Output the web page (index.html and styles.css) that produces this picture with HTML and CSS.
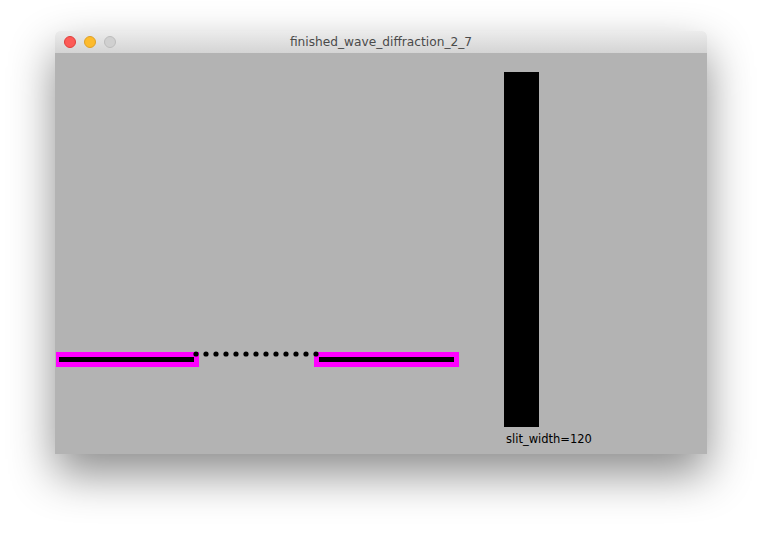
FILE: index.html
```html
<!DOCTYPE html>
<html>
<head>
<meta charset="utf-8">
<link rel="stylesheet" href="styles.css">
</head>
<body>
<div class="window">
  <div class="titlebar">
    <div class="lights">
      <span class="light red"></span>
      <span class="light yellow"></span>
      <span class="light gray"></span>
    </div>
    <div class="title">finished_wave_diffraction_2_7</div>
  </div>
  <div class="content">
    <svg class="canvas" width="652" height="401" viewBox="0 0 652 401">
      <rect x="1" y="299" width="143" height="15" fill="#ff00ff"/>
      <rect x="4" y="304" width="135" height="5" fill="#000"/>
      <rect x="259" y="299" width="145" height="15" fill="#ff00ff"/>
      <rect x="264" y="304" width="135" height="5" fill="#000"/>
      <g fill="#000">
        <circle cx="141" cy="301" r="2.6"/>
        <circle cx="151" cy="301" r="2.6"/>
        <circle cx="161" cy="301" r="2.6"/>
        <circle cx="171" cy="301" r="2.6"/>
        <circle cx="181" cy="301" r="2.6"/>
        <circle cx="191" cy="301" r="2.6"/>
        <circle cx="201" cy="301" r="2.6"/>
        <circle cx="211" cy="301" r="2.6"/>
        <circle cx="221" cy="301" r="2.6"/>
        <circle cx="231" cy="301" r="2.6"/>
        <circle cx="241" cy="301" r="2.6"/>
        <circle cx="251" cy="301" r="2.6"/>
        <circle cx="261" cy="301" r="2.6"/>
      </g>
      <rect x="449" y="19" width="35" height="355" fill="#000"/>
      <text class="label" x="451" y="390">slit_width=120</text>
    </svg>
  </div>
</div>
</body>
</html>
```

FILE: styles.css
```css
html, body {
  margin: 0;
  padding: 0;
  background: #ffffff;
}
body {
  width: 762px;
  height: 534px;
  overflow: hidden;
  padding: 31px 0 0 55px;
  box-sizing: border-box;
}
.window {
  width: 652px;
  height: 423px;
  display: flex;
  flex-direction: column;
  border-radius: 5px 5px 0 0;
  box-shadow: 0 20px 45px 0 rgba(0, 0, 0, 0.45);
  overflow: hidden;
}
.titlebar {
  height: 22px;
  flex: 0 0 22px;
  background: linear-gradient(#ececec, #d4d4d4);
  display: flex;
  align-items: center;
  position: relative;
}
.lights {
  display: flex;
  gap: 8px;
  padding-left: 9px;
  align-items: center;
}
.light {
  width: 12px;
  height: 12px;
  border-radius: 50%;
  box-sizing: border-box;
}
.red { background: #fc5b57; border: 1px solid #df3e3a; }
.yellow { background: #fdbb2d; border: 1px solid #dea026; }
.gray { background: #d0d0d0; border: 1px solid #bcbcbc; }
.title {
  position: absolute;
  left: 0;
  right: 0;
  top: 0;
  line-height: 22px;
  text-align: center;
  font-family: "DejaVu Sans", sans-serif;
  font-size: 12.2px;
  color: #4a4a4a;
  pointer-events: none;
}
.content {
  flex: 1;
  background: #b3b3b3;
}
.canvas {
  display: block;
}
.label {
  font-family: "DejaVu Sans", sans-serif;
  font-size: 11.5px;
  fill: #000;
}
```
